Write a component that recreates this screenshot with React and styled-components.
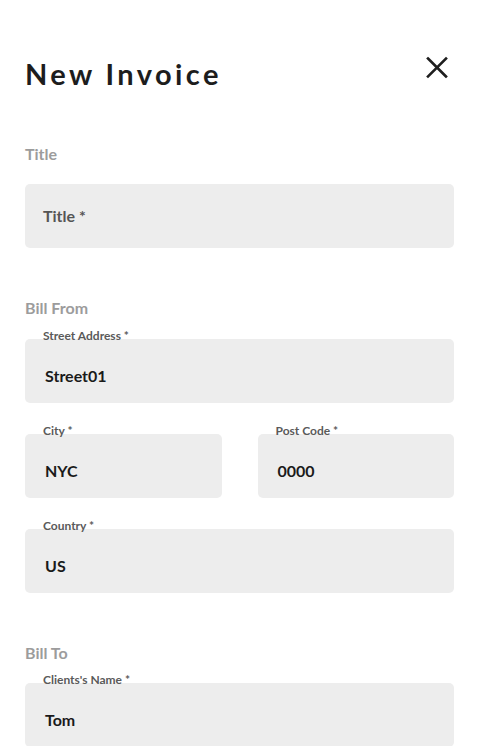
import { createGlobalStyle, styled } from "styled-components";

const GlobalStyle = createGlobalStyle`
  * { box-sizing: border-box; }
  body {
    margin: 0;
    background: #ffffff;
    font-family: Lato, "Noto Sans", sans-serif;
  }
`;

function CloseIcon() {
  return (
    <svg width="24" height="24" viewBox="0 0 24 24">
      <path
        d="M3 2.5 L21 20.5 M21 2.5 L3 20.5"
        stroke="#1e1e1e"
        strokeWidth="2.6"
        strokeLinecap="square"
        fill="none"
      />
    </svg>
  );
}

function Field({ label, value, placeholder }) {
  return (
    <FieldWrap>
      {label && <FloatLabel>{label} *</FloatLabel>}
      <Box>
        {value ? <Value>{value}</Value> : <Placeholder>{placeholder} *</Placeholder>}
      </Box>
    </FieldWrap>
  );
}

function App() {
  return (
    <>
      <GlobalStyle />
      <Page>
        <Header>
          <Heading>New Invoice</Heading>
          <CloseButton>
            <CloseIcon />
          </CloseButton>
        </Header>

        <SectionLabel $top={52}>Title</SectionLabel>
        <Stack $top={20}>
          <Field placeholder="Title" />
        </Stack>

        <SectionLabel $top={50}>Bill From</SectionLabel>
        <Stack $top={21}>
          <Field label="Street Address" value="Street01" />
          <Row>
            <Field label="City" value="NYC" />
            <Field label="Post Code" value="0000" />
          </Row>
          <Field label="Country" value="US" />
        </Stack>

        <SectionLabel $top={50}>Bill To</SectionLabel>
        <Stack $top={20}>
          <Field label="Clients's Name" value="Tom" />
        </Stack>
      </Page>
    </>
  );
}

const Page = styled.div`
  width: 478px;
  padding: 56px 24px 40px 25px;
`;

const Header = styled.div`
  display: flex;
  align-items: flex-start;
  justify-content: space-between;
`;

const Heading = styled.h1`
  margin: 0;
  font-size: 29px;
  font-weight: 700;
  letter-spacing: 3.4px;
  color: #1d1d1d;
  line-height: 36px;
`;

const CloseButton = styled.button`
  border: none;
  background: none;
  padding: 0;
  margin: 0 5px 0 0;
  display: flex;
  cursor: pointer;
`;

const SectionLabel = styled.div`
  margin-top: ${({ $top }) => $top}px;
  font-size: 16px;
  font-weight: 700;
  color: #9c9c9c;
  line-height: 20px;
`;

const Stack = styled.div`
  margin-top: ${({ $top }) => $top}px;
  display: flex;
  flex-direction: column;
  gap: 31px;
`;

const Row = styled.div`
  display: grid;
  grid-template-columns: 1fr 1fr;
  gap: 36px;
`;

const FieldWrap = styled.div`
  position: relative;
`;

const FloatLabel = styled.span`
  position: absolute;
  left: 18px;
  top: -10px;
  font-size: 12px;
  font-weight: 700;
  color: #5a5a5a;
  line-height: 14px;
  z-index: 1;
`;

const Box = styled.div`
  height: 64px;
  background: #ededed;
  border-radius: 5px;
  display: flex;
  align-items: center;
  padding: 8px 20px 0;
`;

const Value = styled.span`
  font-size: 16px;
  font-weight: 700;
  color: #1a1a1a;
`;

const Placeholder = styled.span`
  margin-top: -10px;
  margin-left: -2px;
  font-size: 16px;
  font-weight: 700;
  color: #555555;
`;

export default App;
